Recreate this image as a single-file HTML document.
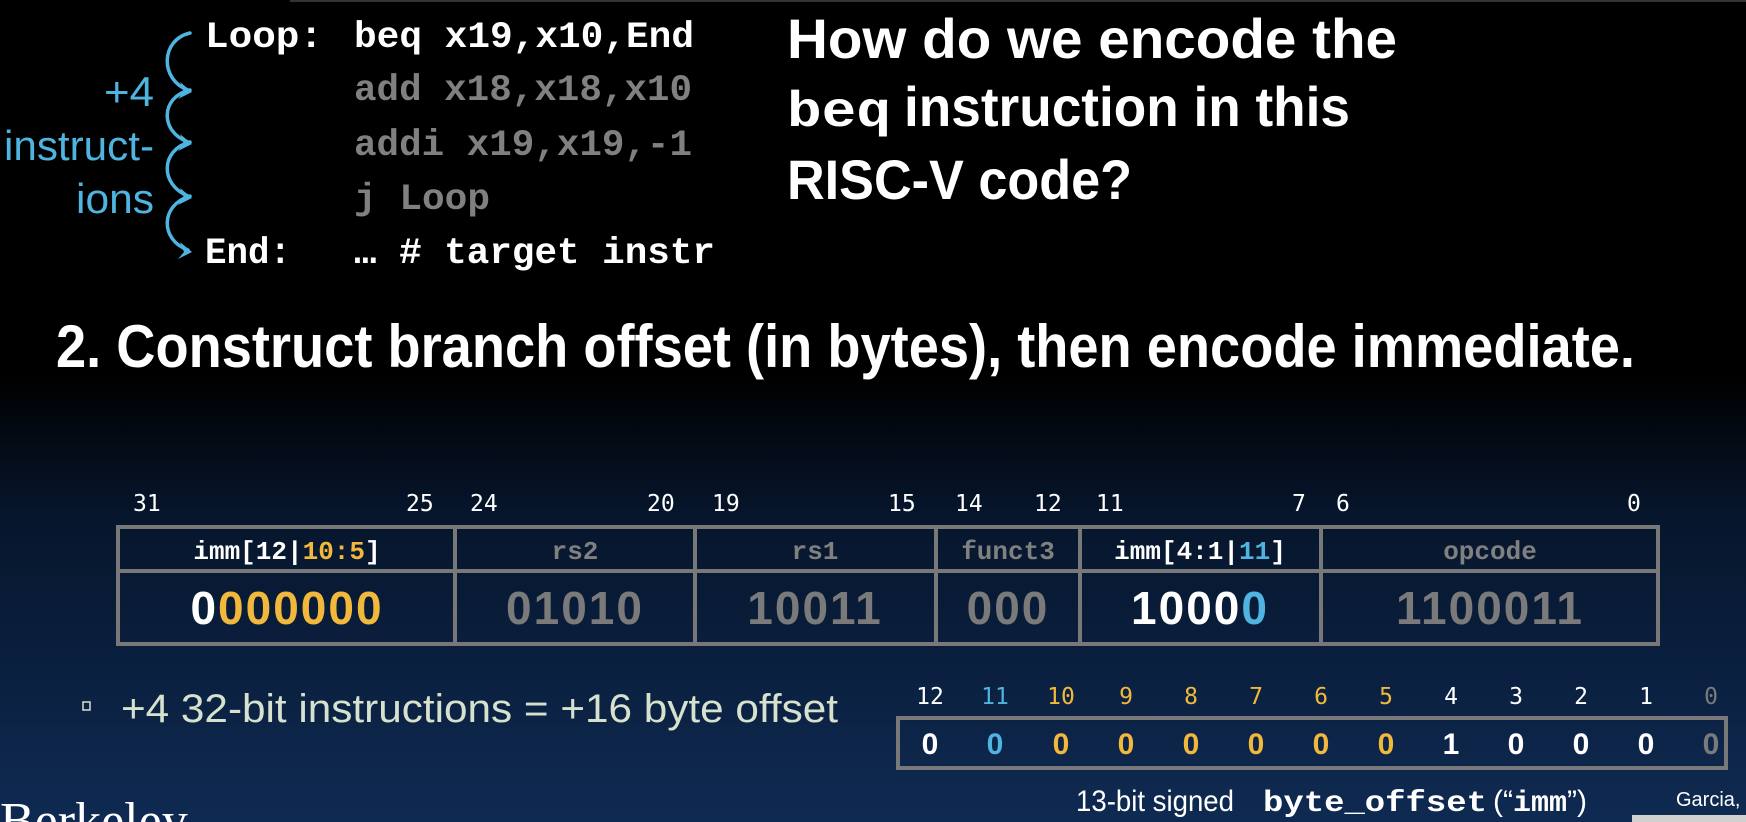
<!DOCTYPE html>
<html><head><meta charset="utf-8"><style>
html,body{margin:0;padding:0;background:#000;overflow:hidden}
svg{display:block}
.m{font-family:"Liberation Mono",monospace;font-weight:bold}
.s{font-family:"Liberation Sans",sans-serif}
.n{font-family:"DejaVu Sans Mono","Liberation Mono",monospace}
</style></head><body>
<svg width="1746" height="822" viewBox="0 0 1746 822" xmlns="http://www.w3.org/2000/svg">
<defs>
<linearGradient id="bg" x1="0" y1="0" x2="0" y2="1">
<stop offset="0" stop-color="#000"/>
<stop offset="0.46" stop-color="#000"/>
<stop offset="0.62" stop-color="#06152b"/>
<stop offset="1" stop-color="#0f2a52"/>
</linearGradient>
</defs>
<rect width="1746" height="822" fill="url(#bg)"/>
<line x1="290" y1="1" x2="1746" y2="1" stroke="#333" stroke-width="2"/>

<!-- code -->
<g class="m" font-size="37">
<text x="205" y="47" fill="#fff" textLength="118" lengthAdjust="spacingAndGlyphs">Loop:</text>
<text x="354" y="47" fill="#fff" textLength="340" lengthAdjust="spacingAndGlyphs">beq x19,x10,End</text>
<text x="354" y="100" fill="#808080" textLength="338" lengthAdjust="spacingAndGlyphs">add x18,x18,x10</text>
<text x="354" y="155" fill="#808080" textLength="338" lengthAdjust="spacingAndGlyphs">addi x19,x19,-1</text>
<text x="354" y="209" fill="#808080" textLength="136" lengthAdjust="spacingAndGlyphs">j Loop</text>
<text x="205" y="263" fill="#fff" textLength="86" lengthAdjust="spacingAndGlyphs">End:</text>
<text x="354" y="263" fill="#fff" textLength="361" lengthAdjust="spacingAndGlyphs">… # target instr</text>
</g>

<!-- blue labels -->
<g class="s" font-size="42" fill="#4fb4df" text-anchor="end">
<text x="154" y="106" textLength="50" lengthAdjust="spacingAndGlyphs">+4</text>
<text x="154" y="160" textLength="150" lengthAdjust="spacingAndGlyphs">instruct-</text>
<text x="154" y="213" textLength="78" lengthAdjust="spacingAndGlyphs">ions</text>
</g>
<g fill="none" stroke="#4fb4df" stroke-width="3.5" stroke-linecap="round">
<path d="M190,33 C160,40 160,80 188,90"/>
<path d="M190,90 C160,97 160,132 188,142"/>
<path d="M190,142 C160,150 160,185 188,196"/>
<path d="M190,196 C160,205 160,240 188,250"/>
</g>
<g fill="#4fb4df">
<path d="M192,92 L180,82 L184,92 L178,99 Z"/>
<path d="M192,144 L180,134 L184,144 L178,151 Z"/>
<path d="M192,198 L180,188 L184,198 L178,205 Z"/>
<path d="M192,252 L180,242 L184,252 L178,259 Z"/>
</g>

<!-- heading -->
<g class="s" font-weight="bold" font-size="56" fill="#fff">
<text x="787" y="58" textLength="610" lengthAdjust="spacingAndGlyphs">How do we encode the</text>
<text x="787" y="126" class="m" font-size="50" textLength="104" lengthAdjust="spacingAndGlyphs">beq</text>
<text x="904" y="126" textLength="446" lengthAdjust="spacingAndGlyphs">instruction in this</text>
<text x="787" y="199" textLength="345" lengthAdjust="spacingAndGlyphs">RISC-V code?</text>
<text x="56" y="367" font-size="60" textLength="1579" lengthAdjust="spacingAndGlyphs">2. Construct branch offset (in bytes), then encode immediate.</text>
</g>

<!-- bit numbers -->
<g class="n" font-size="23" fill="#fff">
<text x="133" y="511">31</text><text x="406" y="511">25</text>
<text x="470" y="511">24</text><text x="647" y="511">20</text>
<text x="712" y="511">19</text><text x="888" y="511">15</text>
<text x="955" y="511">14</text><text x="1034" y="511">12</text>
<text x="1096" y="511">11</text><text x="1292" y="511">7</text>
<text x="1336" y="511">6</text><text x="1627" y="511">0</text>
</g>

<!-- table -->
<g fill="none" stroke="#787878" stroke-width="4">
<rect x="118" y="527" width="1540" height="117"/>
<line x1="118" y1="571" x2="1658" y2="571"/>
<line x1="455" y1="527" x2="455" y2="644"/>
<line x1="695" y1="527" x2="695" y2="644"/>
<line x1="936" y1="527" x2="936" y2="644"/>
<line x1="1080" y1="527" x2="1080" y2="644"/>
<line x1="1321" y1="527" x2="1321" y2="644"/>
</g>
<g class="m" font-size="26" text-anchor="middle">
<text x="287" y="559" fill="#fff">imm[12|<tspan fill="#f1b83c">10:5</tspan>]</text>
<text x="575" y="559" fill="#808080">rs2</text>
<text x="815" y="559" fill="#808080">rs1</text>
<text x="1008" y="559" fill="#808080">funct3</text>
<text x="1200" y="559" fill="#fff">imm[4:1|<tspan fill="#4fb4df">11</tspan>]</text>
<text x="1490" y="559" fill="#808080">opcode</text>
</g>
<g class="s" font-weight="bold" font-size="46" text-anchor="middle">
<text x="287" y="624" fill="#f1b83c" letter-spacing="2"><tspan fill="#fff">0</tspan>000000</text>
<text x="575" y="624" fill="#7a7a7a" letter-spacing="2">01010</text>
<text x="815" y="624" fill="#7a7a7a" letter-spacing="2">10011</text>
<text x="1008" y="624" fill="#7a7a7a" letter-spacing="2">000</text>
<text x="1200" y="624" fill="#fff" letter-spacing="2">1000<tspan fill="#4fb4df">0</tspan></text>
<text x="1490" y="624" fill="#7a7a7a" letter-spacing="2">1100011</text>
</g>

<!-- bullet -->
<rect x="83" y="702" width="7" height="8" fill="none" stroke="#d6e2cd" stroke-width="1.5"/>
<text x="121" y="722" class="s" font-size="40" fill="#d6e2cd" textLength="717" lengthAdjust="spacingAndGlyphs">+4 32-bit instructions = +16 byte offset</text>

<!-- small row -->
<g class="n" font-size="23" text-anchor="middle">
<text x="930" y="704" fill="#fff">12</text>
<text x="995" y="704" fill="#4fb4df">11</text>
<text x="1061" y="704" fill="#f1b83c">10</text>
<text x="1126" y="704" fill="#f1b83c">9</text>
<text x="1191" y="704" fill="#f1b83c">8</text>
<text x="1256" y="704" fill="#f1b83c">7</text>
<text x="1321" y="704" fill="#f1b83c">6</text>
<text x="1386" y="704" fill="#f1b83c">5</text>
<text x="1451" y="704" fill="#fff">4</text>
<text x="1516" y="704" fill="#fff">3</text>
<text x="1581" y="704" fill="#fff">2</text>
<text x="1646" y="704" fill="#fff">1</text>
<text x="1711" y="704" fill="#7a7a7a">0</text>
</g>
<rect x="898" y="718" width="828" height="50" fill="none" stroke="#787878" stroke-width="4"/>
<g class="s" font-weight="bold" font-size="30" text-anchor="middle">
<text x="930" y="754" fill="#fff">0</text>
<text x="995" y="754" fill="#4fb4df">0</text>
<text x="1061" y="754" fill="#f1b83c">0</text>
<text x="1126" y="754" fill="#f1b83c">0</text>
<text x="1191" y="754" fill="#f1b83c">0</text>
<text x="1256" y="754" fill="#f1b83c">0</text>
<text x="1321" y="754" fill="#f1b83c">0</text>
<text x="1386" y="754" fill="#f1b83c">0</text>
<text x="1451" y="754" fill="#fff">1</text>
<text x="1516" y="754" fill="#fff">0</text>
<text x="1581" y="754" fill="#fff">0</text>
<text x="1646" y="754" fill="#fff">0</text>
<text x="1711" y="754" fill="#7a7a7a">0</text>
</g>

<!-- caption -->
<text x="1076" y="811" class="s" font-size="30" fill="#fff" textLength="158" lengthAdjust="spacingAndGlyphs">13-bit signed</text>
<text x="1263" y="811" class="m" font-size="30" fill="#fff" textLength="224" lengthAdjust="spacingAndGlyphs">byte_offset</text>
<text x="1493" y="811" class="s" font-size="30" fill="#fff">(“<tspan class="m">imm</tspan>”)</text>
<text x="1676" y="806" class="s" font-size="20" fill="#fff">Garcia, Y</text>
<rect x="1632" y="815" width="114" height="7" fill="#d0d0d0"/>
<text x="0" y="838" font-family="Liberation Serif, serif" font-size="52" fill="#fff">Berkeley</text>
</svg>
</body></html>
